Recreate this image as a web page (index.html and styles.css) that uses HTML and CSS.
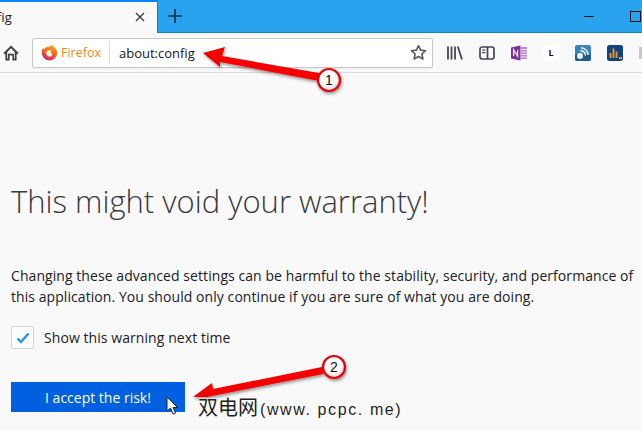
FILE: index.html
```html
<!DOCTYPE html>
<html>
    <head>
        <title>about:config</title>
        <meta charset="UTF-8">
        <link rel="stylesheet" href="styles.css">
    </head>
    <body>
        <div id="tabbar">
            <div class="tab">
                <span class="tab-title">fig</span>
                <svg class="tab-close" width="10" height="10" viewBox="0 0 10 10"><path d="M1 1L9 9M9 1L1 9" stroke="#3c3c46" stroke-width="1.4" fill="none"/></svg>
            </div>
            <svg class="new-tab" width="14" height="14" viewBox="0 0 14 14"><path d="M7 0V14M0 7H14" stroke="#0c2c48" stroke-width="1.6" fill="none"/></svg>
            <div class="win-controls">
                <span class="win-min"></span>
                <span class="win-max"></span>
            </div>
        </div>

        <div id="toolbar">
            <svg class="home" width="16" height="16" viewBox="0 0 16 16"><path d="M8 0.6L0.4 8L1.8 9.4L2.4 8.8V15.4H6.6V10.6H9.4V15.4H13.6V8.8L14.2 9.4L15.6 8L8 0.6ZM4.2 13.6V7.2L8 3.3L11.8 7.2V13.6H11V8.8H5V13.6Z" fill="#404048"/></svg>
            <div class="urlbar">
                <svg class="fx-logo" width="17" height="17" viewBox="0 0 17 17">
                    <defs>
                        <linearGradient id="fx" x1="0.7" y1="0" x2="0.3" y2="1">
                            <stop offset="0" stop-color="#ffb01f"/>
                            <stop offset="0.55" stop-color="#f7591f"/>
                            <stop offset="1" stop-color="#c4218a"/>
                        </linearGradient>
                    </defs>
                    <path d="M11 0.5C11.5 2 13 2.5 14 4C15.6 5.6 16.3 7 16.2 9C16 13.2 12.6 16.4 8.5 16.4C4 16.4 0.8 13 0.8 8.6C0.8 6.8 1.4 5 2.4 3.8L3.2 5.4C4 4 5.6 3 7.4 2.8C9.4 2.5 10.6 1.8 11 0.5Z" fill="url(#fx)"/>
                    <path d="M5.2 8.6C5.6 7 6.8 6 8.2 6L11 6.8L9.2 8.4C10.6 8.6 11.6 9.6 11.2 11C10.8 12.4 9.2 13 7.8 12.6C6.2 12.2 5 10.4 5.2 8.6Z" fill="#fff3d8"/>
                </svg>
                <span class="fx-label">Firefox</span>
                <span class="url-sep"></span>
                <span class="url-text">about:config</span>
                <svg class="star" width="17" height="17" viewBox="0 0 17 17"><path d="M8.5 1.6L10.6 6.1L15.6 6.7L11.9 10L12.9 15L8.5 12.5L4.1 15L5.1 10L1.4 6.7L6.4 6.1Z" fill="none" stroke="#5a5a60" stroke-width="1.6" stroke-linejoin="round"/></svg>
            </div>
            <div class="tools">
                <svg width="16" height="16" viewBox="0 0 16 16"><path d="M1 1.5V14.5M4.5 1.5V14.5M8 1.5V14.5M10.8 1.5L15 14.5" stroke="#45454d" stroke-width="1.8" fill="none"/></svg>
                <svg width="16" height="16" viewBox="0 0 16 16"><rect x="1" y="2" width="14" height="12" rx="2.2" fill="none" stroke="#45454d" stroke-width="1.7"/><path d="M8.5 2V14" stroke="#45454d" stroke-width="1.7"/><path d="M3.2 5.2H6.4M3.2 7.6H6.4" stroke="#45454d" stroke-width="1.2"/></svg>
                <svg width="16" height="16" viewBox="0 0 16 16"><path d="M0 2.5L9.5 0.5V15.5L0 13.5Z" fill="#7d2f9e"/><rect x="9.5" y="2" width="6.5" height="12" fill="#b98ccb"/><path d="M10 4.5H16M10 7H16M10 9.5H16M10 12H16" stroke="#f0e4f5" stroke-width="0.9"/><path d="M2.6 11V5L6.6 11V5" stroke="#f3eaf6" stroke-width="1.3" fill="none"/></svg>
                <span class="tool-l">L</span>
                <svg width="16" height="16" viewBox="0 0 16 16"><rect width="16" height="16" rx="2" fill="#3b83b8"/><rect y="9" width="16" height="7" rx="2" fill="#1f5c8e"/><circle cx="5" cy="11" r="3" fill="#eef5fa"/><path d="M5.5 5.5A5.5 5.5 0 0 1 10.5 10.5M6 2.8A8 8 0 0 1 13.2 10" stroke="#eef5fa" stroke-width="1.5" fill="none"/></svg>
                <svg width="16" height="16" viewBox="0 0 16 16"><rect width="16" height="16" rx="2.5" fill="#0f4480"/><path d="M3.5 13V8M6.5 13V3.5M9.5 13V6.5M12 13H15" stroke="#f59a16" stroke-width="1.8" fill="none"/></svg>
                <span class="tool-cut"></span>
            </div>
        </div>

        <div id="content">
            <h1 class="warn-title">This might void your warranty!</h1>
            <p class="warn-text">Changing these advanced settings can be harmful to the stability, security, and performance of<br>this application. You should only continue if you are sure of what you are doing.</p>
            <label class="warn-check">
                <span class="checkbox">
                    <svg width="14" height="12" viewBox="0 0 14 12"><path d="M1.5 6.5L5 10L12.5 1.5" stroke="#2a93dc" stroke-width="2.4" fill="none"/></svg>
                </span>
                Show this warning next time
            </label>
            <button class="accept">I accept the risk!</button>
        </div>

        <svg id="marks" width="642" height="431" viewBox="0 0 642 431">
            <defs>
                <filter id="shadow" x="-20%" y="-40%" width="140%" height="200%">
                    <feDropShadow dx="1" dy="2" stdDeviation="1.5" flood-color="#000" flood-opacity="0.4"/>
                </filter>
                <radialGradient id="ball" cx="0.45" cy="0.4" r="0.6">
                    <stop offset="0.6" stop-color="#fff"/>
                    <stop offset="1" stop-color="#e8c8c8"/>
                </radialGradient>
            </defs>
            <g filter="url(#shadow)">
                <path d="M203 53L225 47L222 56L319 73L319 81L220 62L220 67Z" fill="#f40006"/>
                <circle cx="329" cy="80" r="11" fill="url(#ball)" stroke="#e30008" stroke-width="2.2"/>
            </g>
            <text class="mark-num" x="329" y="85">1</text>
            <g filter="url(#shadow)">
                <path d="M193 397L212 383L213 389L322 367L323 374L207 397Z" fill="#f40006"/>
                <circle cx="334" cy="367" r="11" fill="url(#ball)" stroke="#e30008" stroke-width="2.2"/>
            </g>
            <text class="mark-num" x="334" y="372">2</text>
            <path d="M167 397V411L170.5 408L173 414L175.5 413L173 407.5H177.5Z" fill="#fff" stroke="#222" stroke-width="1"/>
        </svg>

        <div class="watermark"><span class="wm-cjk">双电网</span><span class="wm-latin">(www. pcpc. me)</span></div>
    </body>
</html>
```

FILE: styles.css
```css
html, body {
    margin: 0;
    height: 431px;
    overflow: hidden;
}

body {
    position: relative;
    background-color: #f9f9fa;
    font-family: "Open Sans", "Noto Sans", sans-serif;
    color: #202023;
}

#tabbar {
    display: flex;
    align-items: center;
    height: 33px;
    background-color: #2aa3ef;
    border-bottom: 1px solid #1c7fb8;
    box-sizing: border-box;
}

.tab {
    display: flex;
    align-items: center;
    justify-content: space-between;
    box-sizing: border-box;
    width: 158px;
    height: 33px;
    padding-right: 12px;
    background-color: #f9f9fa;
    border-top: 2px solid #0a84ff;
    border-right: 1px solid #1c7fb8;
    font-size: 13px;
}

.tab-title {
    margin-left: -3px;
}

.new-tab {
    margin-left: 10px;
}

.win-controls {
    display: flex;
    align-items: center;
    gap: 36px;
    margin-left: auto;
    margin-right: 1px;
}

.win-min {
    width: 10px;
    height: 1px;
    background-color: #111;
}

.win-max {
    width: 9px;
    height: 9px;
    border: 1px solid #111;
}

#toolbar {
    display: flex;
    align-items: center;
    height: 40px;
    box-sizing: border-box;
    padding-left: 3px;
    border-bottom: 1px solid #dcdcde;
}

.home {
    flex: none;
}

.urlbar {
    display: flex;
    flex: none;
    align-items: center;
    box-sizing: border-box;
    width: 401px;
    height: 30px;
    margin-left: 13px;
    padding: 0 5px 0 8px;
    background-color: #fff;
    border: 1px solid #c8c8ca;
    border-radius: 2px;
    box-shadow: 0 1px 1px rgba(0, 0, 0, 0.06);
}

.fx-label {
    margin-left: 3px;
    color: #ee8a1c;
    font-size: 12.5px;
}

.url-sep {
    width: 1px;
    height: 24px;
    margin: 0 9px 0 8px;
    background-color: #dcdcde;
}

.url-text {
    flex: 1;
    font-size: 13px;
    color: #15141a;
}

.tools {
    display: flex;
    flex: none;
    align-items: center;
    gap: 16px;
    margin-left: 14px;
}

.tool-l {
    width: 16px;
    height: 16px;
    background-color: #fff;
    color: #111;
    font-size: 9px;
    font-weight: 700;
    line-height: 16px;
    text-align: center;
}

.tool-cut {
    width: 16px;
    height: 12px;
    background-color: #c9c9c9;
}

#content {
    padding: 103px 0 0 11px;
}

.warn-title {
    margin: 0;
    font-size: 31px;
    font-weight: 300;
    line-height: 50px;
    color: #3a3a40;
}

.warn-text {
    margin: 39px 0 0;
    font-size: 14px;
    letter-spacing: 0.065px;
    line-height: 21px;
    white-space: nowrap;
}

.warn-check {
    display: flex;
    align-items: center;
    gap: 10px;
    margin-top: 19px;
    font-size: 14px;
    letter-spacing: 0.07px;
}

.checkbox {
    display: flex;
    align-items: center;
    justify-content: center;
    box-sizing: border-box;
    width: 23px;
    height: 23px;
    background-color: #fff;
    border: 1px solid #d4d4d6;
    border-radius: 2px;
}

.accept {
    display: block;
    width: 174px;
    height: 30px;
    margin-top: 33px;
    padding: 0;
    background-color: #0060df;
    border: none;
    color: #fff;
    font-family: inherit;
    font-size: 14px;
}

#marks {
    position: absolute;
    top: 0;
    left: 0;
}

.mark-num {
    font-family: "Liberation Sans", sans-serif;
    font-size: 14px;
    text-anchor: middle;
    fill: #111;
}

.watermark {
    position: absolute;
    left: 198px;
    top: 393px;
    line-height: 28px;
    white-space: nowrap;
    color: #222;
    text-shadow: 0 0 2px #fff, 0 0 2px #fff;
}

.wm-cjk {
    font-family: "Noto Sans CJK SC", sans-serif;
    font-size: 20px;
}

.wm-latin {
    margin-left: 2px;
    font-family: "Liberation Sans", sans-serif;
    font-size: 16px;
    letter-spacing: 1.6px;
}
```
